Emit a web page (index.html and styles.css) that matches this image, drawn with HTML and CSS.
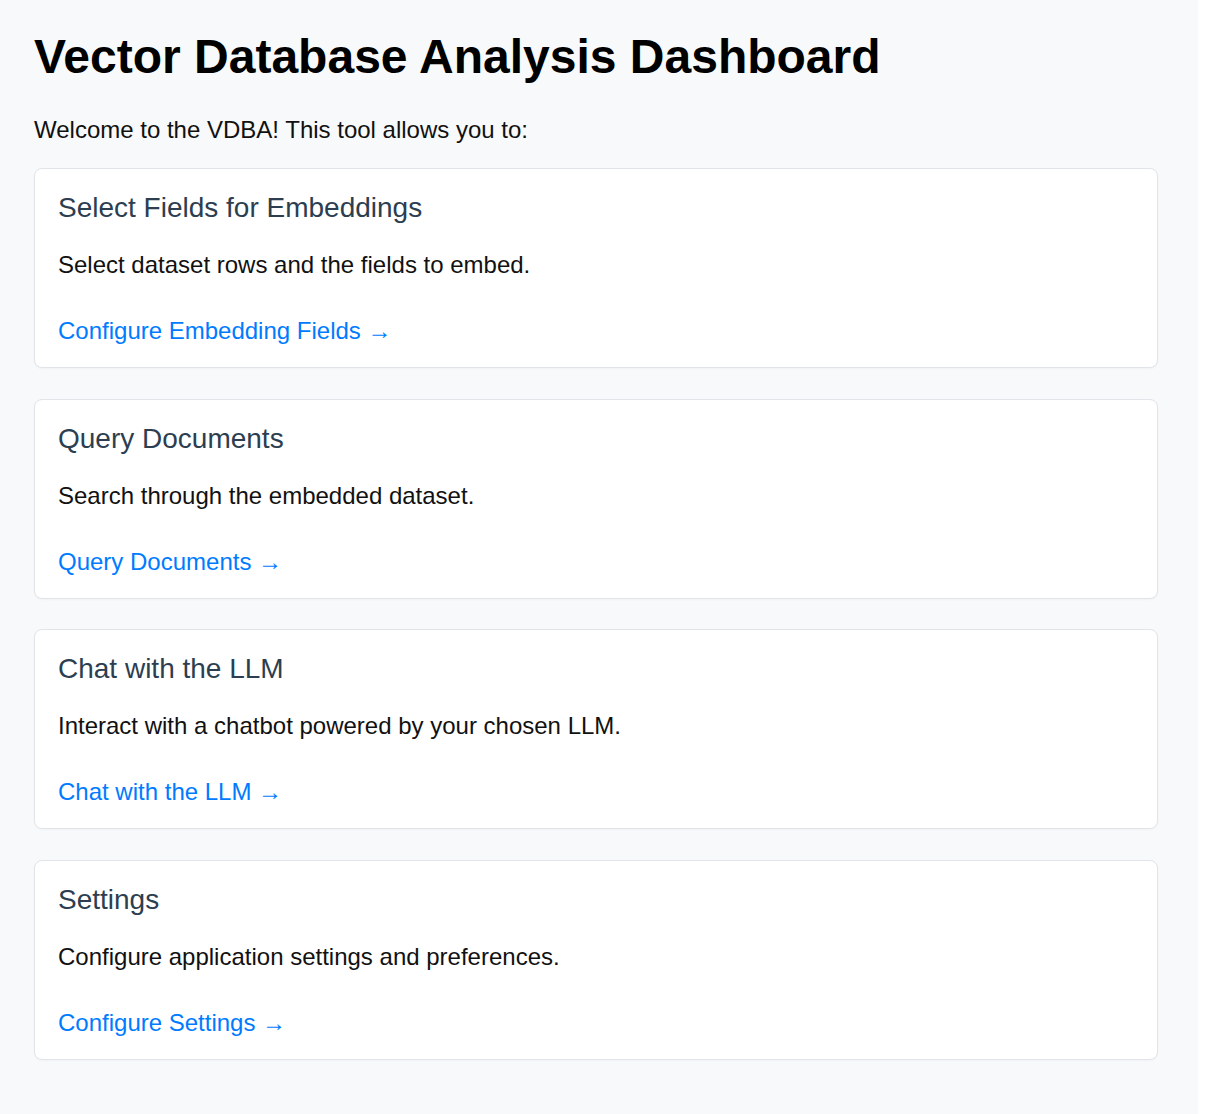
FILE: index.html
```html
<!DOCTYPE html>
<html lang="en">
<head>
<meta charset="utf-8">
<title>Vector Database Analysis Dashboard</title>
<link rel="stylesheet" href="styles.css">
</head>
<body>
<main class="page">
  <h1 class="title">Vector Database Analysis Dashboard</h1>
  <p class="intro">Welcome to the VDBA! This tool allows you to:</p>
  <div class="cards">
    <section class="card">
      <h2 class="card-title">Select Fields for Embeddings</h2>
      <p class="card-text">Select dataset rows and the fields to embed.</p>
      <a class="card-link" href="#">Configure Embedding Fields →</a>
    </section>
    <section class="card">
      <h2 class="card-title">Query Documents</h2>
      <p class="card-text">Search through the embedded dataset.</p>
      <a class="card-link" href="#">Query Documents →</a>
    </section>
    <section class="card">
      <h2 class="card-title">Chat with the LLM</h2>
      <p class="card-text">Interact with a chatbot powered by your chosen LLM.</p>
      <a class="card-link" href="#">Chat with the LLM →</a>
    </section>
    <section class="card">
      <h2 class="card-title">Settings</h2>
      <p class="card-text">Configure application settings and preferences.</p>
      <a class="card-link" href="#">Configure Settings →</a>
    </section>
  </div>
</main>
</body>
</html>
```

FILE: styles.css
```css
html, body {
  margin: 0;
  padding: 0;
  background: #ffffff;
  font-family: "Liberation Sans", Arial, sans-serif;
}

.page {
  width: 1198px;
  min-height: 1114px;
  box-sizing: border-box;
  background: #f8f9fa;
  padding: 28px 40px 40px 34px;
}

.title {
  margin: 0;
  font-size: 48px;
  font-weight: 700;
  line-height: 58px;
  color: #000;
}

.intro {
  margin: 26px 0 20px;
  font-size: 24px;
  line-height: 36px;
  color: #111;
}

.cards {
  display: flex;
  flex-direction: column;
  gap: 30.7px;
}

.card {
  background: #fff;
  border: 1px solid #e1e4e8;
  border-radius: 8px;
  box-shadow: 0 1px 2px rgba(0, 0, 0, 0.03);
  padding: 20px 23px 18px;
  display: flex;
  flex-direction: column;
  align-items: flex-start;
}

.card-title {
  margin: 0;
  font-size: 28px;
  font-weight: 400;
  line-height: 38px;
  color: #2c3e50;
}

.card-text {
  margin: 20px 0 0;
  font-size: 24px;
  line-height: 36px;
  color: #111;
}

.card-link {
  margin-top: 30px;
  font-size: 24px;
  line-height: 36px;
  color: #007bff;
  text-decoration: none;
}
```
